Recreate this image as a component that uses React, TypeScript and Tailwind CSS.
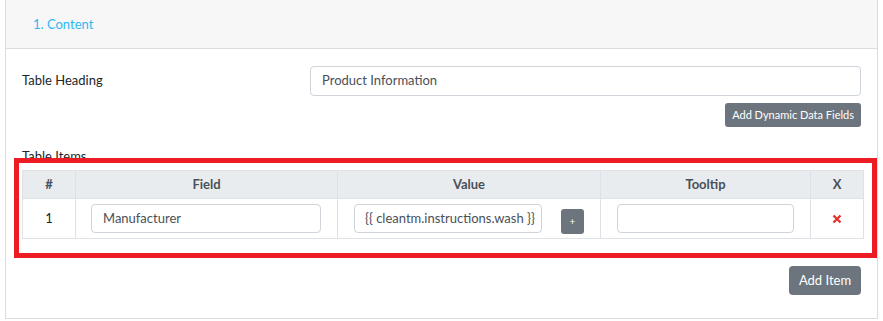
import React from "react";

const font = { fontFamily: '"Segoe UI", Lato, "Noto Sans", sans-serif' };

export default function App() {
  return (
    <div className="w-[883px] h-[321px] bg-white overflow-hidden relative text-[#212529]" style={font}>
      <div className="ml-[5px] mr-[5px] w-[873px] h-[319px] border-x border-b border-[#dcdcdc] flex flex-col">
        <div className="h-[49px] bg-[#f7f7f7] border-b border-[#dcdcdc] flex items-center pl-[27px] pt-[1px]">
          <span className="text-[13px] text-[#2eb6f5]">1. Content</span>
        </div>
        <div className="px-[16px] pt-[17px] flex flex-col">
          <div className="flex items-center h-[30px]">
            <div className="w-[288px] text-[13px]">Table Heading</div>
            <div className="flex-1 h-[30px] border border-[#ced4da] rounded-[4px] flex items-center px-[11px] text-[13px] text-[#495057]">
              Product Information
            </div>
          </div>
          <div className="flex justify-end mt-[7px]">
            <button className="h-[24px] px-[7px] bg-[#6c757d] text-white text-[11px] rounded-[3px]">Add Dynamic Data Fields</button>
          </div>
          <div className="mt-[22px] text-[13px] leading-[14px] h-[14px]">Table Items</div>
          <table className="mt-[7px] w-[841px] border-collapse text-[13px] table-fixed">
            <colgroup>
              <col className="w-[53px]" />
              <col className="w-[262px]" />
              <col className="w-[263px]" />
              <col className="w-[210px]" />
              <col className="w-[53px]" />
            </colgroup>
            <thead>
              <tr className="bg-[#e9ecef]">
                <th className="h-[28px] p-0 border border-[#dee2e6] font-bold text-[#495057]">#</th>
                <th className="h-[28px] p-0 border border-[#dee2e6] font-bold text-[#495057]">Field</th>
                <th className="h-[28px] p-0 border border-[#dee2e6] font-bold text-[#495057]">Value</th>
                <th className="h-[28px] p-0 border border-[#dee2e6] font-bold text-[#495057]">Tooltip</th>
                <th className="h-[28px] p-0 border border-[#dee2e6] font-bold text-[#495057]">X</th>
              </tr>
            </thead>
            <tbody>
              <tr>
                <td className="h-[40px] p-0 border border-[#dee2e6] text-center">1</td>
                <td className="h-[40px] p-0 border border-[#dee2e6] pl-[15px] pr-[16px]">
                  <div className="h-[29px] border border-[#ced4da] rounded-[4px] flex items-center px-[11px] text-[#495057]">Manufacturer</div>
                </td>
                <td className="h-[40px] p-0 border border-[#dee2e6] pl-[16px]">
                  <div className="flex items-center">
                    <div className="w-[188px] h-[29px] border border-[#ced4da] rounded-[4px] flex items-center px-[10px] text-[#495057] whitespace-nowrap overflow-hidden">{"{{ cleantm.instructions.wash }}"}</div>
                    <button className="ml-[19px] mt-[6px] w-[23px] h-[25px] bg-[#6c757d] rounded-[3px] text-white text-[10px] flex items-center justify-center">+</button>
                  </div>
                </td>
                <td className="h-[40px] p-0 border border-[#dee2e6] pl-[16px] pr-[16px]">
                  <div className="h-[29px] border border-[#ced4da] rounded-[4px]"></div>
                </td>
                <td className="h-[40px] p-0 border border-[#dee2e6]">
                  <div className="flex justify-center">
                    <svg width="10" height="10" viewBox="0 0 10 10">
                      <path d="M1.5 1.5 L8.5 8.5 M8.5 1.5 L1.5 8.5" stroke="#e3342f" strokeWidth="2.4" strokeLinecap="butt" />
                    </svg>
                  </div>
                </td>
              </tr>
            </tbody>
          </table>
          <div className="flex justify-end mt-[27px]">
            <button className="h-[29px] w-[72px] bg-[#6c757d] text-white text-[13px] rounded-[4px]">Add Item</button>
          </div>
        </div>
      </div>
      <div className="absolute left-[14px] top-[158px] w-[863px] h-[100px] border-[5px] border-[#ed1c24] pointer-events-none"></div>
    </div>
  );
}
